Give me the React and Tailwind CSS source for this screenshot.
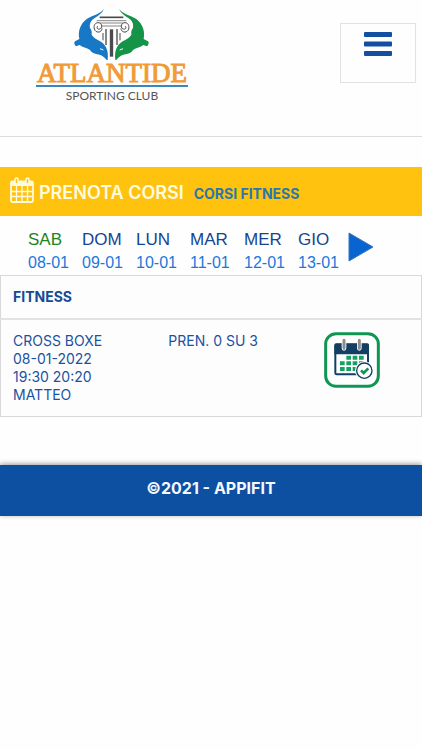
import { useState } from 'react';

const days = [
  { name: 'SAB', date: '08-01' },
  { name: 'DOM', date: '09-01' },
  { name: 'LUN', date: '10-01' },
  { name: 'MAR', date: '11-01' },
  { name: 'MER', date: '12-01' },
  { name: 'GIO', date: '13-01' },
];

const courses = [
  { name: 'CROSS BOXE', date: '08-01-2022', time: '19:30 20:20', trainer: 'MATTEO', booked: 0, places: 3 },
];

const Scroll = () => (
  <g fill="none" stroke="#4a4a4c">
    <path d="M96 70c0 12-15 15-21 6s-2-23 9-23 15 13 7 18-13-4-7-8" strokeWidth="3" />
    <path d="M108 72v48" strokeWidth="4" />
    <path d="M99 84v22" strokeWidth="3" />
  </g>
);

const Dolphin = ({ color }) => (
  <>
    <path
      fill={color}
      d="M102 11C92 27 68 30 50 42C31 57 23 78 28 102L15 109C11 113 13 119 18 124L29 120C37 127 50 128 60 135C68 149 83 146 96 152C105 157 108 165 113 165C116 139 110 122 93 110C79 103 70 97 65 89C66 81 65 75 60 69C58 56 62 48 73 40C86 31 97 24 102 11Z"
    />
    <path fill="none" stroke="#fff" strokeWidth="3" d="M90 131l10 4" />
  </>
);

// Two dolphins around an ionic column
const Emblem = () => (
  <svg className="h-15 w-[83px]" viewBox="0 0 249 180" aria-hidden="true">
    <g fill="none" stroke="#4a4a4c">
      <path d="M89 37h71" strokeWidth="5" />
      <path d="M80 47h89" strokeWidth="2" />
      <path d="M90 54h69M96 63h57" strokeWidth="2" />
      <path d="M124.500 73v82" strokeWidth="10" />
    </g>
    <Scroll />
    <Dolphin color="#1878c5" />
    <g transform="matrix(-1 0 0 1 249 0)">
      <Scroll />
      <Dolphin color="#159447" />
    </g>
  </svg>
);

const Logo = () => (
  <a href="#home" className="flex flex-col items-center">
    <Emblem />
    <span className="-mt-1 border-b-2 border-[#3b86bd] px-px font-['Liberation_Serif',serif] text-[27px] leading-6 text-[#f19a38] [-webkit-text-stroke:1px_#f19a38]">
      ATLANTIDE
    </span>
    <span className="mt-px font-[Lato,sans-serif] text-xs leading-4 text-[#555]">SPORTING CLUB</span>
  </a>
);

const CalendarIcon = () => (
  <svg className="h-[26px] w-6 shrink-0" viewBox="0 0 24 26" fill="none" stroke="#fffbe0" aria-hidden="true">
    <rect x="1" y="4.5" width="22" height="20.5" rx="1.5" strokeWidth="1.8" />
    <path d="M1 7h22" strokeWidth="4" />
    <path d="M6.5 9v16M12 9v16M17.5 9v16M1 14.500h22M1 19.500h22" strokeWidth="1.3" />
    <rect x="5" y="1" width="3" height="6" rx="1.5" fill="#ffc20e" strokeWidth="1.5" />
    <rect x="16" y="1" width="3" height="6" rx="1.5" fill="#ffc20e" strokeWidth="1.5" />
  </svg>
);

const BookIcon = () => (
  <svg className="size-14" viewBox="0 0 168 168" aria-hidden="true">
    <rect x="5" y="5" width="158" height="158" rx="31" fill="#fff" stroke="#109653" strokeWidth="9" />
    <rect x="34" y="38" width="98" height="89" rx="4" fill="#fff" stroke="#123f63" strokeWidth="6" />
    <path fill="#123f63" d="M31 39q0-5 5-5h94q5 0 5 5v28H31z" />
    <path
      fill="#16a062"
      d="M67 71h14v12H67zM86 71h14v12H86zM105 71h14v12h-14zM48 88h14v12H48zM67 88h14v12H67zM86 88h14v12H86zM105 88h14v12h-14zM48 105h14v12H48zM67 105h14v12H67zM86 105h14v12H86z"
    />
    <path d="M60 25v24M106 25v24" stroke="#fff" strokeWidth="14" strokeLinecap="round" />
    <path d="M60 25v24M106 25v24" stroke="#8b8d8f" strokeWidth="9" strokeLinecap="round" />
    <circle cx="121" cy="116" r="28" fill="#fff" />
    <circle cx="121" cy="116" r="23" fill="#fff" stroke="#123f63" strokeWidth="4" />
    <path d="M111 115l8 8 14-14" fill="none" stroke="#109653" strokeWidth="8" />
  </svg>
);

const App = () => {
  const [selected, setSelected] = useState('08-01');

  return (
    <div className="min-h-screen bg-[#fefefe] font-[Inter,sans-serif] text-[#1b52a0]">
      {/* Header */}
      <header className="flex h-[137px] items-start justify-between border-b border-[#dddddd] pr-1.5 pl-9">
        <div className="pt-[5px]">
          <Logo />
        </div>
        <button
          type="button"
          aria-label="Menu"
          className="mt-[23px] flex h-[60px] w-[76px] justify-center border border-[#e2e2e2] pt-2"
        >
          <svg className="h-6 w-7" viewBox="0 0 28 24" fill="#134fa0" aria-hidden="true">
            <rect y="0" width="28" height="5" rx="1" />
            <rect y="9.500" width="28" height="5" rx="1" />
            <rect y="19" width="28" height="5" rx="1" />
          </svg>
        </button>
      </header>

      <main>
        {/* Title bar */}
        <div className="mt-[30px] flex h-[49px] items-center bg-[#ffc20e] pb-1 pl-2.5">
          <CalendarIcon />
          <h1 className="ml-[5px] pt-1.5 text-lg leading-6 font-semibold text-[#fffbe0]">PRENOTA CORSI</h1>
          <a href="#fitness" className="ml-2.5 pt-2 text-sm leading-5 font-bold text-[#2a78ab]">
            CORSI FITNESS
          </a>
        </div>

        {/* Days */}
        <nav className="flex h-[59px] items-start pt-3 pl-7 font-['Liberation_Sans',sans-serif]">
          {days.map((day) => (
            <button
              key={day.date}
              type="button"
              onClick={() => setSelected(day.date)}
              className="w-[54px] shrink-0 text-left"
            >
              <span
                className={
                  selected === day.date
                    ? 'block text-[17px] leading-[23px] text-[#1c8420]'
                    : 'block text-[17px] leading-[23px] text-[#134591]'
                }
              >
                {day.name}
              </span>
              <span className="block text-base leading-[23px] text-[#1b78dc]">{day.date}</span>
            </button>
          ))}
          <button type="button" aria-label="Giorni successivi" className="-ml-1 pt-1">
            <svg className="h-[30px] w-[26px]" viewBox="0 0 26 30" aria-hidden="true">
              <path d="M1 1v28l24-14z" fill="#0864d0" stroke="#3976b8" strokeWidth="1" />
            </svg>
          </button>
        </nav>

        {/* Courses */}
        <table className="w-full table-fixed border-collapse border border-[#d8d8d8] bg-[#fdfdfd] text-sm leading-[18px]">
          <colgroup>
            <col className="w-[37%]" />
            <col className="w-[37%]" />
            <col className="w-[26%]" />
          </colgroup>
          <thead>
            <tr className="h-[43px] border-b-2 border-[#e2e2e2]">
              <th colSpan={3} className="px-3 text-left font-bold text-[#164a97]">FITNESS</th>
            </tr>
          </thead>
          <tbody>
            {courses.map((course) => (
              <tr key={course.name} className="align-top">
                <td className="p-3">
                  {course.name}
                  <br />
                  {course.date}
                  <br />
                  {course.time}
                  <br />
                  {course.trainer}
                </td>
                <td className="p-3">
                  PREN. {course.booked} SU {course.places}
                </td>
                <td className="p-3">
                  <button type="button" aria-label="Prenota" className="block">
                    <BookIcon />
                  </button>
                </td>
              </tr>
            ))}
          </tbody>
        </table>
      </main>

      <footer className="mt-12 bg-[#0d4fa1] pt-2.5 pb-3.5 text-center leading-[27px] font-bold text-[#f4f8ff] shadow-[0_-1px_5px_#999999]">
        ©2021 - APPIFIT
      </footer>
    </div>
  );
};

export default App;
